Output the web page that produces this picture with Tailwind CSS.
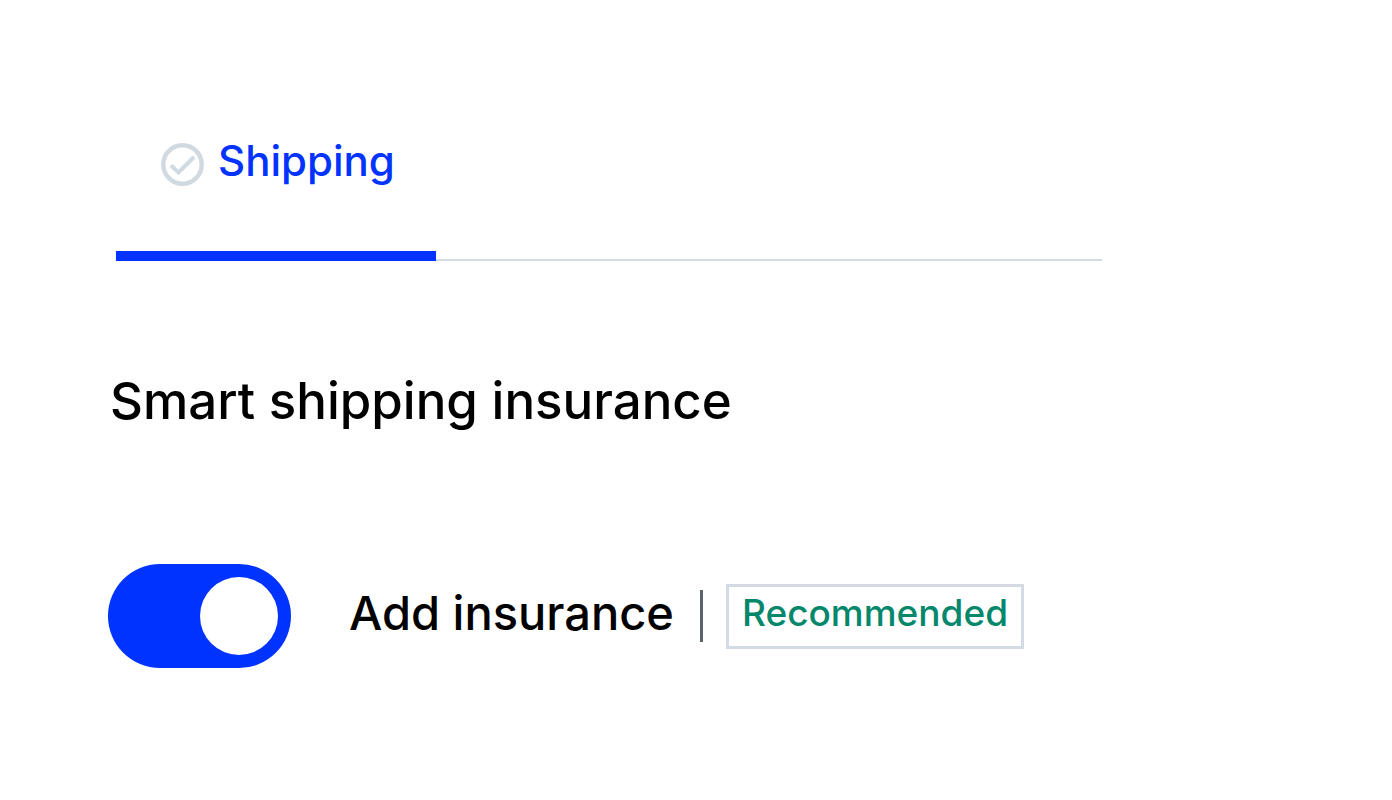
<!DOCTYPE html>
<html lang="en">
<head>
<meta charset="utf-8">
<meta name="viewport" content="width=device-width, initial-scale=1">
<title>Shipping</title>
<script src="https://cdn.jsdelivr.net/npm/@tailwindcss/browser@4"></script>
</head>
<body class="min-h-screen bg-white font-['Inter',sans-serif] font-medium text-black">
<main class="pl-[108px] pt-[130px]">
  <nav class="ml-2 mr-[290px] flex shadow-[inset_0_-2px_#d3dae3]">
    <a href="#shipping" aria-current="page" class="flex w-80 items-start gap-[14px] border-b-10 border-[#0033ff] pb-[59px] pl-[45px] text-[#0033ff]">
      <svg class="mt-[13px] size-[43px] shrink-0" viewBox="0 0 43 43" fill="none" stroke="#d1d9e1" aria-hidden="true">
        <circle cx="21.5" cy="21.5" r="19.2" stroke-width="4.4"/>
        <path d="M10 22.5 17.5 29.5 33 14" stroke-width="4"/>
      </svg>
      <span class="text-[42px] leading-[62px]">Shipping</span>
    </a>
  </nav>
  <section id="shipping">
    <h1 class="ml-[2px] mt-[108px] text-[51px] leading-[64px]">Smart shipping insurance</h1>
    <div class="mt-[131px] flex items-center">
      <input id="insurance" type="checkbox" role="switch" checked class="h-[104px] w-[183px] shrink-0 cursor-pointer appearance-none rounded-full bg-gray-300 p-[13px] before:block before:size-[78px] before:rounded-full before:bg-white checked:bg-[#0033ff] checked:before:ml-auto">
      <label for="insurance" class="ml-[58px] pb-[6px] text-[47px] leading-[60px]">Add insurance</label>
      <span class="ml-[26px] h-[52px] w-[3px] bg-[#5a626b]" aria-hidden="true"></span>
      <span class="ml-[23px] border-3 border-[#d3dae3] px-[13px] pb-2 text-[37px] leading-[51px] text-[#05876c]">Recommended</span>
    </div>
  </section>
</main>
</body>
</html>
